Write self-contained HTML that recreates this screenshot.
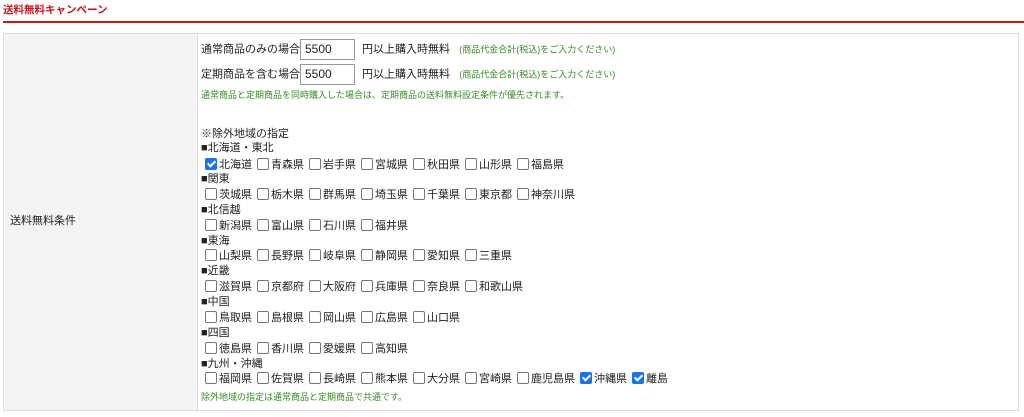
<!DOCTYPE html>
<html><head><meta charset="utf-8"><style>
body{margin:0;width:1024px;height:417px;background:#fff;font-family:"Liberation Sans","Noto Sans CJK JP",sans-serif;font-size:11px;color:#222;position:relative;overflow:hidden}
.t{position:absolute;left:3px;top:2px;font-size:10.5px;font-weight:bold;color:#c8161d}
.rl{position:absolute;left:3px;top:21px;width:1021px;height:2px;background:#c8161d}
.tbl{position:absolute;left:3px;top:33px;width:1014px;height:376px;border:1px solid #ddd}
.lc{position:absolute;left:0;top:0;width:193px;height:100%;background:#f3f4f3;border-right:1px solid #ddd}
.lc span{position:absolute;left:6px;top:178px}
.a{position:absolute;white-space:nowrap;line-height:15px}
.inp{display:inline-block;width:49px;height:19px;border:1px solid #999;vertical-align:middle;padding-left:4px;line-height:19px;font-size:12px;margin:0 4px 0 0;box-sizing:content-box}
.g{color:#3a8a2a;font-size:9px}
.cb{display:inline-block;width:10px;height:10px;border:1px solid #777;border-radius:2px;vertical-align:-2px;margin-right:2px;position:relative;background:#fff}
.cb.on{background:#1a73e8;border-color:#1a73e8}
.cb.on:after{content:"";position:absolute;left:3px;top:0px;width:3px;height:6px;border:solid #fff;border-width:0 2px 2px 0;transform:rotate(45deg)}
.i{margin-right:5px}
</style></head><body>
<div class="t">送料無料キャンペーン</div>
<div class="rl"></div>
<div class="tbl"><div class="lc"><span>送料無料条件</span></div></div>
<div class="a" style="left:201px;top:39px">通常商品のみの場合<span class="inp">5500</span> 円以上購入時無料 &nbsp;&nbsp;<span class="g">(商品代金合計(税込)をご入力ください)</span></div>
<div class="a" style="left:201px;top:64px">定期商品を含む場合<span class="inp">5500</span> 円以上購入時無料 &nbsp;&nbsp;<span class="g">(商品代金合計(税込)をご入力ください)</span></div>
<div class="a g" style="left:201px;top:88px">通常商品と定期商品を同時購入した場合は、定期商品の送料無料設定条件が優先されます。</div>
<div class="a" style="left:201px;top:127px">※除外地域の指定</div>
<div class="a" style="left:201px;top:141px">■北海道・東北</div>
<div class="a" style="left:205px;top:158px"><span class="i"><span class="cb on"></span>北海道</span><span class="i"><span class="cb"></span>青森県</span><span class="i"><span class="cb"></span>岩手県</span><span class="i"><span class="cb"></span>宮城県</span><span class="i"><span class="cb"></span>秋田県</span><span class="i"><span class="cb"></span>山形県</span><span class="i"><span class="cb"></span>福島県</span></div>
<div class="a" style="left:201px;top:172px">■関東</div>
<div class="a" style="left:205px;top:188px"><span class="i"><span class="cb"></span>茨城県</span><span class="i"><span class="cb"></span>栃木県</span><span class="i"><span class="cb"></span>群馬県</span><span class="i"><span class="cb"></span>埼玉県</span><span class="i"><span class="cb"></span>千葉県</span><span class="i"><span class="cb"></span>東京都</span><span class="i"><span class="cb"></span>神奈川県</span></div>
<div class="a" style="left:201px;top:203px">■北信越</div>
<div class="a" style="left:205px;top:219px"><span class="i"><span class="cb"></span>新潟県</span><span class="i"><span class="cb"></span>富山県</span><span class="i"><span class="cb"></span>石川県</span><span class="i"><span class="cb"></span>福井県</span></div>
<div class="a" style="left:201px;top:234px">■東海</div>
<div class="a" style="left:205px;top:249px"><span class="i"><span class="cb"></span>山梨県</span><span class="i"><span class="cb"></span>長野県</span><span class="i"><span class="cb"></span>岐阜県</span><span class="i"><span class="cb"></span>静岡県</span><span class="i"><span class="cb"></span>愛知県</span><span class="i"><span class="cb"></span>三重県</span></div>
<div class="a" style="left:201px;top:264px">■近畿</div>
<div class="a" style="left:205px;top:280px"><span class="i"><span class="cb"></span>滋賀県</span><span class="i"><span class="cb"></span>京都府</span><span class="i"><span class="cb"></span>大阪府</span><span class="i"><span class="cb"></span>兵庫県</span><span class="i"><span class="cb"></span>奈良県</span><span class="i"><span class="cb"></span>和歌山県</span></div>
<div class="a" style="left:201px;top:295px">■中国</div>
<div class="a" style="left:205px;top:311px"><span class="i"><span class="cb"></span>鳥取県</span><span class="i"><span class="cb"></span>島根県</span><span class="i"><span class="cb"></span>岡山県</span><span class="i"><span class="cb"></span>広島県</span><span class="i"><span class="cb"></span>山口県</span></div>
<div class="a" style="left:201px;top:326px">■四国</div>
<div class="a" style="left:205px;top:342px"><span class="i"><span class="cb"></span>徳島県</span><span class="i"><span class="cb"></span>香川県</span><span class="i"><span class="cb"></span>愛媛県</span><span class="i"><span class="cb"></span>高知県</span></div>
<div class="a" style="left:201px;top:357px">■九州・沖縄</div>
<div class="a" style="left:205px;top:372px"><span class="i"><span class="cb"></span>福岡県</span><span class="i"><span class="cb"></span>佐賀県</span><span class="i"><span class="cb"></span>長崎県</span><span class="i"><span class="cb"></span>熊本県</span><span class="i"><span class="cb"></span>大分県</span><span class="i"><span class="cb"></span>宮崎県</span><span class="i"><span class="cb"></span>鹿児島県</span><span class="i"><span class="cb on"></span>沖縄県</span><span class="i"><span class="cb on"></span>離島</span></div>
<div class="a g" style="left:201px;top:390px">除外地域の指定は通常商品と定期商品で共通です。</div>
</body></html>
